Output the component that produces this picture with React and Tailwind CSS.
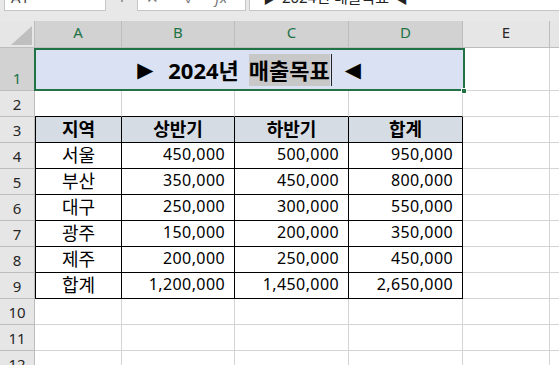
const ROWS = [
  ['서울', '450,000', '500,000', '950,000'],
  ['부산', '350,000', '450,000', '800,000'],
  ['대구', '250,000', '300,000', '550,000'],
  ['광주', '150,000', '200,000', '350,000'],
  ['제주', '200,000', '250,000', '450,000'],
  ['합계', '1,200,000', '1,450,000', '2,650,000'],
];

function TopBar() {
  return (
    <div className="h-[21px] bg-[#e8e8e8] overflow-hidden">
      <div className="flex h-[25px] -mt-[14px] text-[15px] leading-[20px] text-[#444]">
        <div className="ml-[4px] w-[102px] h-full bg-white border border-[#c6c6c6] pl-[6px]">A1</div>
        <div className="w-[31px] flex justify-center">
          <span className="mt-[14px] w-[2px] h-[2px] bg-[#9a9a9a]" />
        </div>
        <div className="w-[109px] h-full bg-white border border-[#c6c6c6] flex text-[#777]">
          <span className="ml-[8px]">✕</span>
          <span className="ml-[26px]">✓</span>
          <span className="ml-[20px] italic">fx</span>
        </div>
        <div className="ml-[3px] flex-1 h-full bg-white border border-r-0 border-[#c6c6c6] pl-[13px] whitespace-nowrap text-[#222]">
          ▶ 2024년 매출목표 ◀
        </div>
      </div>
    </div>
  );
}

const HDR = 'border-r border-b border-[#bdbdbd] flex justify-center text-[15px] leading-[20px]';
const ROWHDR = 'border-r border-b border-[#bdbdbd] bg-[#e6e6e6] flex items-end justify-center pb-[2px] text-[15px] leading-[20px] text-[#262626]';
const GRAY = 'border-r border-b border-[#d4d4d4]';

export default function App() {
  return (
    <div className="w-[559px] h-[365px] overflow-hidden bg-white font-['Noto_Sans','Noto_Sans_CJK_KR',sans-serif] text-black">
      <TopBar />
      <div className="grid grid-cols-[35px_87px_113px_114px_114px_87px_1fr]">
        {/* column headers */}
        <div className="h-[27px] bg-[#e6e6e6] border-r border-b border-[#bdbdbd] relative">
          <svg className="absolute left-0 top-0" width="34" height="26" viewBox="0 0 34 26">
            <polygon points="32,5 32,24 11,24" fill="#bfbfbf" />
          </svg>
        </div>
        {['A', 'B', 'C', 'D'].map((l) => (
          <div key={l} className={`${HDR} h-[27px] bg-[#d2d2d2] pt-[1px] text-[#217346]`}>{l}</div>
        ))}
        <div className={`${HDR} h-[27px] bg-[#e6e6e6] pt-[1px] text-[#262626]`}>E</div>
        <div className="h-[27px] bg-[#e6e6e6] border-b border-[#bdbdbd]" />

        {/* row 1 */}
        <div className={`${ROWHDR} h-[43px] !bg-[#d2d2d2] !text-[#217346]`}>1</div>
        <div className="col-span-4 h-[43px] relative bg-[#d9e1f2] flex items-center justify-center">
          <div className="flex items-center text-[22px] font-bold leading-[32px] whitespace-nowrap">
            <span className="w-[14px] flex justify-center font-['DejaVu_Sans',sans-serif] text-[21px]">▶</span>
            <span className="ml-[16px]">2024년</span>
            <span className="ml-[10px] bg-[#c8c8c8]">매출목표</span>
            <span className="ml-px w-px h-[32px] bg-[#222]" />
            <span className="ml-[14px] w-[14px] flex justify-center font-['DejaVu_Sans',sans-serif] text-[21px]">◀</span>
          </div>
          <div className="absolute -left-px -right-[2px] top-0 bottom-0 border-2 border-[#217346] z-10 pointer-events-none" />
          <div className="absolute -right-[4px] -bottom-[3px] w-[6px] h-[6px] bg-[#217346] border border-white z-20" />
        </div>
        <div className={`${GRAY} h-[43px]`} />
        <div className="h-[43px] border-b border-[#d4d4d4]" />

        {/* row 2 */}
        <div className={`${ROWHDR} h-[26px]`}>2</div>
        {[0, 1, 2, 3].map((i) => (
          <div key={i} className="h-[26px] border-r border-r-[#d4d4d4] border-b border-b-black" />
        ))}
        <div className={`${GRAY} h-[26px]`} />
        <div className="h-[26px] border-b border-[#d4d4d4]" />

        {/* row 3 header */}
        <div className={`${ROWHDR} h-[26px]`}>3</div>
        {['지역', '상반기', '하반기', '합계'].map((t, i) => (
          <div
            key={t}
            className={`h-[26px] bg-[#d6dce4] border-r border-b border-black ${i === 0 ? 'border-l' : ''} flex items-end justify-center pb-[3px] text-[18px] leading-[20px] font-bold`}
          >
            {t}
          </div>
        ))}
        <div className={`${GRAY} h-[26px]`} />
        <div className="h-[26px] border-b border-[#d4d4d4]" />

        {/* data rows */}
        {ROWS.map((r, ri) => (
          <Row key={ri} n={ri + 4} r={r} />
        ))}

        {/* empty rows */}
        {[10, 11, 12].map((n) => (
          <EmptyRow key={n} n={n} />
        ))}
      </div>
    </div>
  );
}

function Row({ n, r }) {
  return (
    <>
      <div className={`${ROWHDR} h-[26px]`}>{n}</div>
      <div className="h-[26px] border-l border-r border-b border-black flex items-end justify-center pb-[3px] text-[18px] leading-[20px]">
        {r[0]}
      </div>
      {r.slice(1).map((v, i) => (
        <div
          key={i}
          className="h-[26px] border-r border-b border-black flex items-end justify-end pr-[9px] pb-[4px] text-[16px] leading-[20px] tracking-[0.4px]"
        >
          {v}
        </div>
      ))}
      <div className={`${GRAY} h-[26px]`} />
      <div className="h-[26px] border-b border-[#d4d4d4]" />
    </>
  );
}

function EmptyRow({ n }) {
  return (
    <>
      <div className={`${ROWHDR} h-[26px]`}>{n}</div>
      <div className={`${GRAY} h-[26px]`} />
      <div className={`${GRAY} h-[26px]`} />
      <div className={`${GRAY} h-[26px]`} />
      <div className={`${GRAY} h-[26px]`} />
      <div className={`${GRAY} h-[26px]`} />
      <div className="h-[26px] border-b border-[#d4d4d4]" />
    </>
  );
}
